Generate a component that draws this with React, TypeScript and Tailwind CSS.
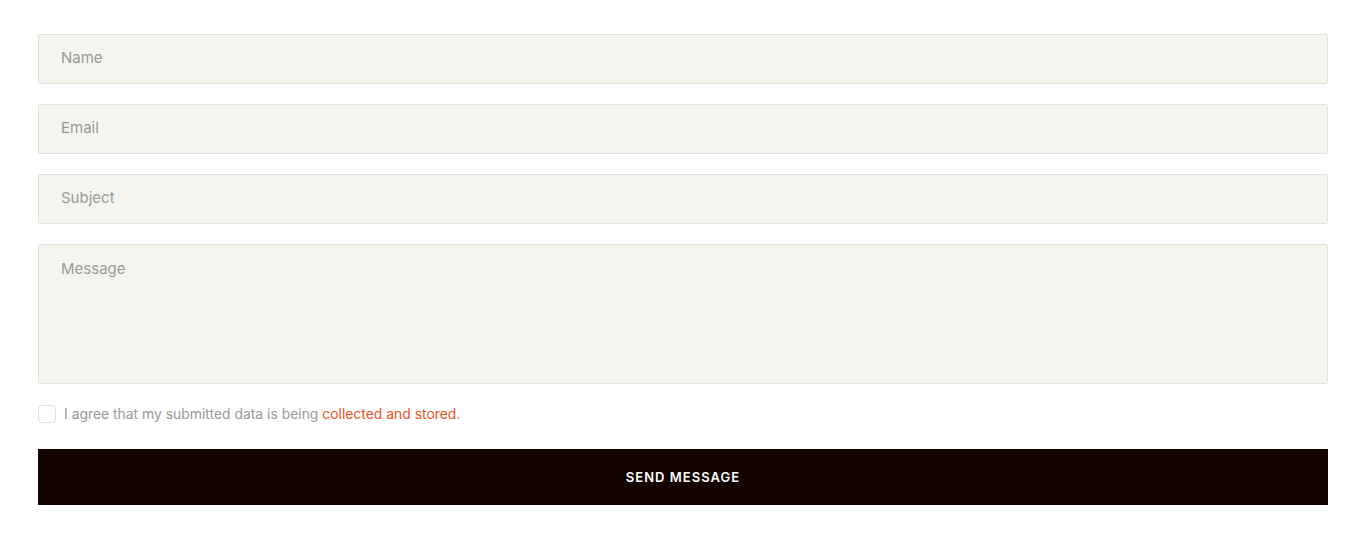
import React from "react";

export default function App() {
  const field =
    "w-full h-[50px] bg-[#f5f5f0] border border-[#e3e3dc] rounded-[2px] px-[22px] pb-[4px] text-[15px] text-[#333] placeholder:text-[#9a9a96] outline-none";
  return (
    <div className="w-[1367px] h-[542px] bg-white pt-[34px] px-[38px]" style={{ fontFamily: "Inter, 'Noto Sans', sans-serif" }}>
      <form className="flex flex-col w-[1290px]" onSubmit={(e) => e.preventDefault()}>
        <div className="flex flex-col gap-[20px]">
          <input className={field} placeholder="Name" />
          <input className={field} placeholder="Email" />
          <input className={field} placeholder="Subject" />
          <textarea
            className="w-full h-[140px] bg-[#f5f5f0] border border-[#e3e3dc] rounded-[2px] px-[22px] pt-[13px] text-[15px] text-[#333] placeholder:text-[#9a9a96] outline-none resize-none"
            placeholder="Message"
          />
        </div>
        <label className="flex items-center gap-[8px] mt-[20px] text-[13.9px] text-[#9a9a96]">
          <span className="w-[18px] h-[18px] border border-[#e0e0da] rounded-[4px] bg-white inline-block" />
          <span>
            I agree that my submitted data is being <span className="text-[#f0511e]">collected and stored</span>.
          </span>
        </label>
        <button
          type="submit"
          className="mt-[24px] w-full h-[56px] pt-[2px] bg-[#140400] text-white text-[13px] font-semibold tracking-[0.08em] uppercase"
        >
          Send Message
        </button>
      </form>
    </div>
  );
}
